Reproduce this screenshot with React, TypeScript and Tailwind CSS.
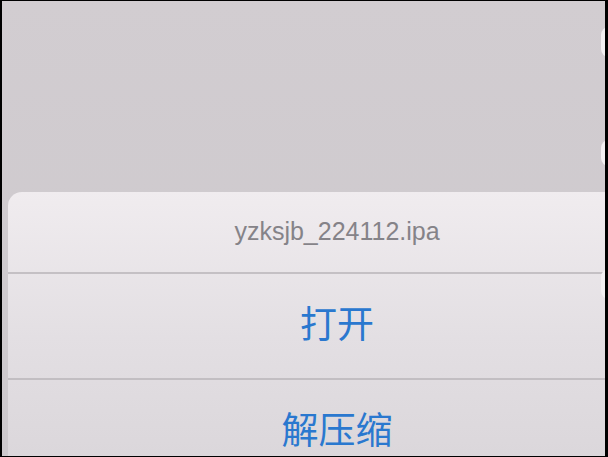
import React from 'react';

const font = '"Liberation Sans", "Noto Sans CJK SC", Arial, sans-serif';

export default function App() {
  return (
    <div
      className="relative w-[608px] h-[457px] overflow-hidden bg-black border-t border-l-2 border-r-[3px] border-b border-black"
      style={{ fontFamily: font }}
    >
      <div className="relative w-full h-full overflow-hidden bg-gradient-to-b from-[#d2cdd1] to-[#ccc8cc] pt-[191px] pl-[6px]">
        {/* side bumps on the right edge */}
        <div className="absolute right-[-12px] top-[26px] w-[16px] h-[30px] rounded-full bg-[#f2f0f2]" />
        <div className="absolute right-[-12px] top-[139px] w-[16px] h-[26px] rounded-full bg-[#f2f0f2]" />

        {/* action sheet */}
        <div className="w-[658px] rounded-tl-[14px] rounded-tr-[14px] bg-gradient-to-b from-[#f0ecef] via-[#e3dfe3] to-[#d9d5d9] flex flex-col">
          <div className="h-[80px] flex items-center justify-center text-[25px] text-[#858388]">
            yzksjb_224112.ipa
          </div>
          <div className="h-[2px] bg-[#c4c0c4]" />
          <div className="h-[104px] flex items-center justify-center text-[37px] text-[#2a78cf]">
            打开
          </div>
          <div className="h-[2px] bg-[#c2bec2]" />
          <div className="h-[104px] flex items-center justify-center text-[37px] text-[#2a78cf]">
            解压缩
          </div>
        </div>
        <div className="absolute right-[-12px] top-[268px] w-[16px] h-[30px] rounded-full bg-[#f2f0f2]" />
      </div>
    </div>
  );
}
